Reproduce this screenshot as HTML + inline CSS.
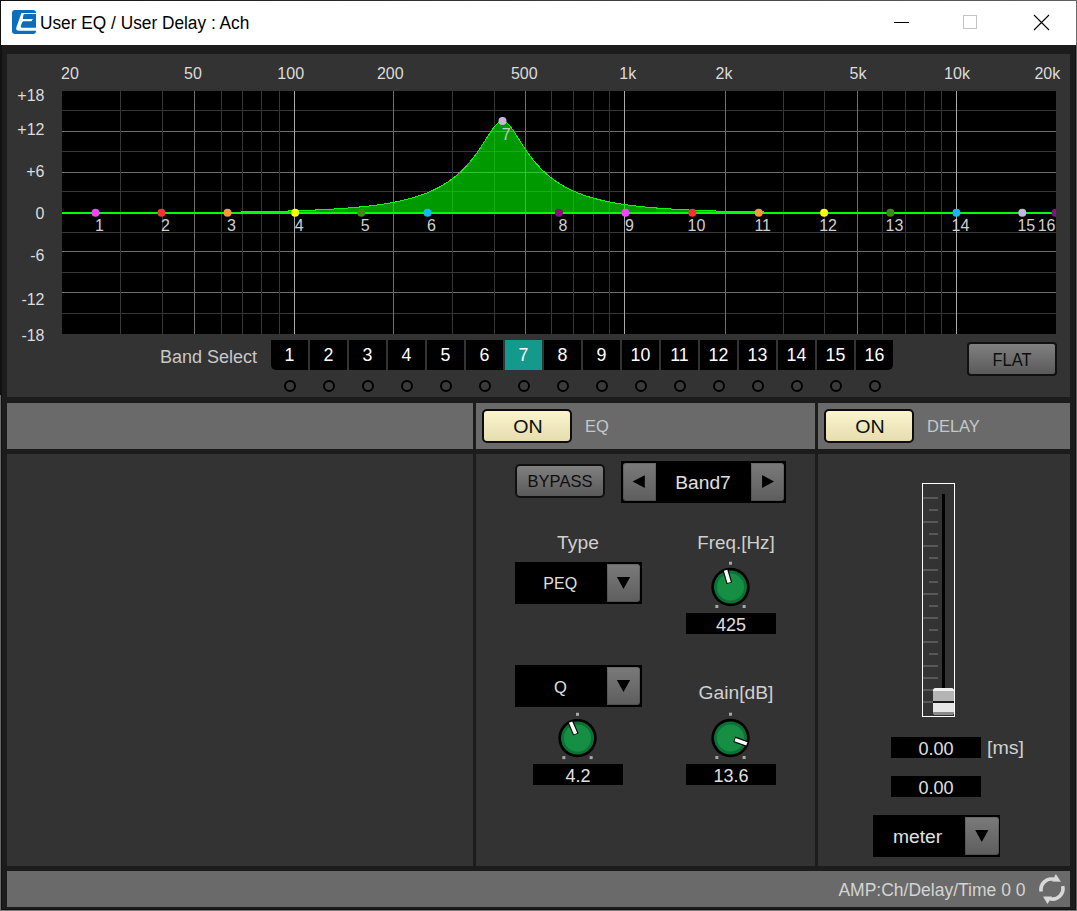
<!DOCTYPE html>
<html><head><meta charset="utf-8"><style>
html,body{margin:0;padding:0;width:1077px;height:911px;overflow:hidden;background:#808080;font-family:"Liberation Sans", sans-serif;}
</style></head><body>
<div style="position:absolute;left:0px;top:0px;width:1076px;height:910px;background:#1c1c1c;"></div><div style="position:absolute;left:0px;top:0px;width:1076px;height:1px;background:linear-gradient(90deg,#111,#606060);"></div><div style="position:absolute;left:0px;top:0px;width:1px;height:395px;background:#111;"></div><div style="position:absolute;left:0px;top:395px;width:1px;height:516px;background:#686868;"></div><div style="position:absolute;left:1px;top:45px;width:1px;height:865px;background:#111;"></div><div style="position:absolute;left:1075px;top:45px;width:1px;height:865px;background:#111;"></div><div style="position:absolute;left:1px;top:909px;width:1075px;height:1px;background:#111;"></div><div style="position:absolute;left:1076px;top:0px;width:1px;height:911px;background:#6a6a6a;"></div><div style="position:absolute;left:0px;top:910px;width:1077px;height:1px;background:#7a7a7a;"></div><div style="position:absolute;left:1px;top:1px;width:1075px;height:44px;background:#ffffff;"></div><svg style="position:absolute;left:12px;top:10px" width="24" height="24" viewBox="0 0 24 24">
<rect x="0" y="0" width="24" height="24" rx="3" fill="#0a6ebd"/>
<path d="M9.4 3.0 L24 3.0 L24 4.1 L12.8 4.1 Q11.5 4.1 11.2 5.6 L10.8 8.9 L20.9 8.9 L19.4 11.2 L11.8 11.2 Q10.4 11.2 10.0 12.6 L8.8 16.0 Q8.3 17.8 10.0 17.8 L24 17.8 L24 20.8 L7.2 20.8 Q3.4 20.8 4.4 17.2 Z" fill="#fff"/>
</svg><div style="position:absolute;left:40.2px;top:11.12px;line-height:25px;height:25px;font-size:18px;color:#000;white-space:nowrap;transform:scaleX(0.96);transform-origin:left center;">User EQ / User Delay : Ach</div><div style="position:absolute;left:894px;top:22px;width:15px;height:1px;background:#000;"></div><div style="position:absolute;left:963px;top:15px;width:14px;height:14px;background:transparent;box-sizing:border-box;border:1px solid #c4c4c4;"></div><svg style="position:absolute;left:1033px;top:14px" width="17" height="17" viewBox="0 0 17 17"><path d="M1 1 L16 16 M16 1 L1 16" stroke="#000" stroke-width="1.1"/></svg><div style="position:absolute;left:7px;top:54px;width:1063px;height:343px;background:#333333;"></div><svg style="position:absolute;left:62px;top:91px" width="994" height="243" viewBox="62 91 994 243" shape-rendering="crispEdges"><rect x="62" y="91" width="994" height="243" fill="#000"/><rect x="62" y="110" width="994" height="1" fill="#363636"/><rect x="62" y="131" width="994" height="1" fill="#6e6e6e"/><rect x="62" y="151" width="994" height="1" fill="#363636"/><rect x="62" y="172" width="994" height="1" fill="#6e6e6e"/><rect x="62" y="191" width="994" height="1" fill="#363636"/><rect x="62" y="232" width="994" height="1" fill="#363636"/><rect x="62" y="251" width="994" height="1" fill="#6e6e6e"/><rect x="62" y="272" width="994" height="1" fill="#363636"/><rect x="62" y="292" width="994" height="1" fill="#6e6e6e"/><rect x="62" y="313" width="994" height="1" fill="#363636"/><rect x="120" y="91" width="1" height="243" fill="#363636"/><rect x="162" y="91" width="1" height="243" fill="#363636"/><rect x="194" y="91" width="1" height="243" fill="#6e6e6e"/><rect x="221" y="91" width="1" height="243" fill="#363636"/><rect x="242" y="91" width="1" height="243" fill="#363636"/><rect x="261" y="91" width="1" height="243" fill="#363636"/><rect x="279" y="91" width="1" height="243" fill="#363636"/><rect x="294" y="91" width="1" height="243" fill="#aaaaaa"/><rect x="393" y="91" width="1" height="243" fill="#6e6e6e"/><rect x="452" y="91" width="1" height="243" fill="#363636"/><rect x="494" y="91" width="1" height="243" fill="#363636"/><rect x="525" y="91" width="1" height="243" fill="#6e6e6e"/><rect x="551" y="91" width="1" height="243" fill="#363636"/><rect x="573" y="91" width="1" height="243" fill="#363636"/><rect x="593" y="91" width="1" height="243" fill="#363636"/><rect x="609" y="91" width="1" height="243" fill="#363636"/><rect x="624" y="91" width="1" height="243" fill="#aaaaaa"/><rect x="725" y="91" width="1" height="243" fill="#6e6e6e"/><rect x="783" y="91" width="1" height="243" fill="#363636"/><rect x="824" y="91" width="1" height="243" fill="#363636"/><rect x="857" y="91" width="1" height="243" fill="#6e6e6e"/><rect x="882" y="91" width="1" height="243" fill="#363636"/><rect x="905" y="91" width="1" height="243" fill="#363636"/><rect x="924" y="91" width="1" height="243" fill="#363636"/><rect x="941" y="91" width="1" height="243" fill="#363636"/><rect x="956" y="91" width="1" height="243" fill="#aaaaaa"/><path d="M62.0 213.00 L62.5 212.92 L63.5 212.92 L64.5 212.92 L65.5 212.92 L66.5 212.91 L67.5 212.91 L68.5 212.91 L69.5 212.91 L70.5 212.91 L71.5 212.91 L72.5 212.91 L73.5 212.91 L74.5 212.90 L75.5 212.90 L76.5 212.90 L77.5 212.90 L78.5 212.90 L79.5 212.90 L80.5 212.90 L81.5 212.89 L82.5 212.89 L83.5 212.89 L84.5 212.89 L85.5 212.89 L86.5 212.89 L87.5 212.89 L88.5 212.88 L89.5 212.88 L90.5 212.88 L91.5 212.88 L92.5 212.88 L93.5 212.88 L94.5 212.87 L95.5 212.87 L96.5 212.87 L97.5 212.87 L98.5 212.87 L99.5 212.86 L100.5 212.86 L101.5 212.86 L102.5 212.86 L103.5 212.86 L104.5 212.85 L105.5 212.85 L106.5 212.85 L107.5 212.85 L108.5 212.85 L109.5 212.84 L110.5 212.84 L111.5 212.84 L112.5 212.84 L113.5 212.84 L114.5 212.83 L115.5 212.83 L116.5 212.83 L117.5 212.83 L118.5 212.82 L119.5 212.82 L120.5 212.82 L121.5 212.82 L122.5 212.81 L123.5 212.81 L124.5 212.81 L125.5 212.81 L126.5 212.80 L127.5 212.80 L128.5 212.80 L129.5 212.79 L130.5 212.79 L131.5 212.79 L132.5 212.79 L133.5 212.78 L134.5 212.78 L135.5 212.78 L136.5 212.77 L137.5 212.77 L138.5 212.77 L139.5 212.76 L140.5 212.76 L141.5 212.76 L142.5 212.75 L143.5 212.75 L144.5 212.75 L145.5 212.74 L146.5 212.74 L147.5 212.74 L148.5 212.73 L149.5 212.73 L150.5 212.72 L151.5 212.72 L152.5 212.72 L153.5 212.71 L154.5 212.71 L155.5 212.70 L156.5 212.70 L157.5 212.70 L158.5 212.69 L159.5 212.69 L160.5 212.68 L161.5 212.68 L162.5 212.67 L163.5 212.67 L164.5 212.66 L165.5 212.66 L166.5 212.65 L167.5 212.65 L168.5 212.64 L169.5 212.64 L170.5 212.63 L171.5 212.63 L172.5 212.62 L173.5 212.62 L174.5 212.61 L175.5 212.61 L176.5 212.60 L177.5 212.60 L178.5 212.59 L179.5 212.58 L180.5 212.58 L181.5 212.57 L182.5 212.57 L183.5 212.56 L184.5 212.55 L185.5 212.55 L186.5 212.54 L187.5 212.53 L188.5 212.53 L189.5 212.52 L190.5 212.51 L191.5 212.51 L192.5 212.50 L193.5 212.49 L194.5 212.49 L195.5 212.48 L196.5 212.47 L197.5 212.46 L198.5 212.46 L199.5 212.45 L200.5 212.44 L201.5 212.43 L202.5 212.42 L203.5 212.42 L204.5 212.41 L205.5 212.40 L206.5 212.39 L207.5 212.38 L208.5 212.37 L209.5 212.36 L210.5 212.36 L211.5 212.35 L212.5 212.34 L213.5 212.33 L214.5 212.32 L215.5 212.31 L216.5 212.30 L217.5 212.29 L218.5 212.28 L219.5 212.27 L220.5 212.26 L221.5 212.25 L222.5 212.24 L223.5 212.22 L224.5 212.21 L225.5 212.20 L226.5 212.19 L227.5 212.18 L228.5 212.17 L229.5 212.15 L230.5 212.14 L231.5 212.13 L232.5 212.12 L233.5 212.10 L234.5 212.09 L235.5 212.08 L236.5 212.07 L237.5 212.05 L238.5 212.04 L239.5 212.02 L240.5 212.01 L241.5 212.00 L242.5 211.98 L243.5 211.97 L244.5 211.95 L245.5 211.94 L246.5 211.92 L247.5 211.91 L248.5 211.89 L249.5 211.87 L250.5 211.86 L251.5 211.84 L252.5 211.82 L253.5 211.81 L254.5 211.79 L255.5 211.77 L256.5 211.75 L257.5 211.73 L258.5 211.72 L259.5 211.70 L260.5 211.68 L261.5 211.66 L262.5 211.64 L263.5 211.62 L264.5 211.60 L265.5 211.58 L266.5 211.56 L267.5 211.54 L268.5 211.52 L269.5 211.49 L270.5 211.47 L271.5 211.45 L272.5 211.43 L273.5 211.40 L274.5 211.38 L275.5 211.35 L276.5 211.33 L277.5 211.31 L278.5 211.28 L279.5 211.25 L280.5 211.23 L281.5 211.20 L282.5 211.18 L283.5 211.15 L284.5 211.12 L285.5 211.09 L286.5 211.06 L287.5 211.04 L288.5 211.01 L289.5 210.98 L290.5 210.95 L291.5 210.92 L292.5 210.88 L293.5 210.85 L294.5 210.82 L295.5 210.79 L296.5 210.75 L297.5 210.72 L298.5 210.69 L299.5 210.65 L300.5 210.62 L301.5 210.58 L302.5 210.54 L303.5 210.51 L304.5 210.47 L305.5 210.43 L306.5 210.39 L307.5 210.35 L308.5 210.31 L309.5 210.27 L310.5 210.23 L311.5 210.18 L312.5 210.14 L313.5 210.10 L314.5 210.05 L315.5 210.01 L316.5 209.96 L317.5 209.92 L318.5 209.87 L319.5 209.82 L320.5 209.77 L321.5 209.72 L322.5 209.67 L323.5 209.62 L324.5 209.56 L325.5 209.51 L326.5 209.46 L327.5 209.40 L328.5 209.35 L329.5 209.29 L330.5 209.23 L331.5 209.17 L332.5 209.11 L333.5 209.05 L334.5 208.99 L335.5 208.92 L336.5 208.86 L337.5 208.79 L338.5 208.73 L339.5 208.66 L340.5 208.59 L341.5 208.52 L342.5 208.45 L343.5 208.37 L344.5 208.30 L345.5 208.22 L346.5 208.15 L347.5 208.07 L348.5 207.99 L349.5 207.91 L350.5 207.83 L351.5 207.74 L352.5 207.66 L353.5 207.57 L354.5 207.48 L355.5 207.39 L356.5 207.30 L357.5 207.20 L358.5 207.11 L359.5 207.01 L360.5 206.91 L361.5 206.81 L362.5 206.71 L363.5 206.60 L364.5 206.50 L365.5 206.39 L366.5 206.28 L367.5 206.16 L368.5 206.05 L369.5 205.93 L370.5 205.81 L371.5 205.69 L372.5 205.56 L373.5 205.44 L374.5 205.31 L375.5 205.18 L376.5 205.04 L377.5 204.90 L378.5 204.76 L379.5 204.62 L380.5 204.48 L381.5 204.33 L382.5 204.18 L383.5 204.02 L384.5 203.87 L385.5 203.70 L386.5 203.54 L387.5 203.37 L388.5 203.20 L389.5 203.03 L390.5 202.85 L391.5 202.67 L392.5 202.48 L393.5 202.29 L394.5 202.10 L395.5 201.90 L396.5 201.70 L397.5 201.50 L398.5 201.29 L399.5 201.07 L400.5 200.85 L401.5 200.63 L402.5 200.40 L403.5 200.17 L404.5 199.93 L405.5 199.68 L406.5 199.43 L407.5 199.18 L408.5 198.92 L409.5 198.65 L410.5 198.38 L411.5 198.10 L412.5 197.82 L413.5 197.53 L414.5 197.23 L415.5 196.92 L416.5 196.61 L417.5 196.29 L418.5 195.97 L419.5 195.63 L420.5 195.29 L421.5 194.94 L422.5 194.58 L423.5 194.22 L424.5 193.84 L425.5 193.46 L426.5 193.07 L427.5 192.66 L428.5 192.25 L429.5 191.83 L430.5 191.40 L431.5 190.96 L432.5 190.50 L433.5 190.04 L434.5 189.56 L435.5 189.07 L436.5 188.57 L437.5 188.06 L438.5 187.54 L439.5 187.00 L440.5 186.45 L441.5 185.88 L442.5 185.30 L443.5 184.70 L444.5 184.09 L445.5 183.47 L446.5 182.83 L447.5 182.17 L448.5 181.49 L449.5 180.80 L450.5 180.09 L451.5 179.36 L452.5 178.61 L453.5 177.84 L454.5 177.05 L455.5 176.24 L456.5 175.41 L457.5 174.56 L458.5 173.69 L459.5 172.79 L460.5 171.87 L461.5 170.92 L462.5 169.95 L463.5 168.95 L464.5 167.93 L465.5 166.88 L466.5 165.80 L467.5 164.70 L468.5 163.56 L469.5 162.40 L470.5 161.21 L471.5 159.98 L472.5 158.73 L473.5 157.45 L474.5 156.13 L475.5 154.79 L476.5 153.42 L477.5 152.01 L478.5 150.58 L479.5 149.12 L480.5 147.64 L481.5 146.12 L482.5 144.59 L483.5 143.04 L484.5 141.47 L485.5 139.90 L486.5 138.31 L487.5 136.73 L488.5 135.16 L489.5 133.61 L490.5 132.09 L491.5 130.60 L492.5 129.17 L493.5 127.81 L494.5 126.53 L495.5 125.35 L496.5 124.29 L497.5 123.36 L498.5 122.58 L499.5 121.97 L500.5 121.53 L501.5 121.27 L502.5 121.20 L503.5 121.33 L504.5 121.64 L505.5 122.13 L506.5 122.79 L507.5 123.62 L508.5 124.59 L509.5 125.69 L510.5 126.89 L511.5 128.20 L512.5 129.58 L513.5 131.03 L514.5 132.53 L515.5 134.06 L516.5 135.62 L517.5 137.19 L518.5 138.78 L519.5 140.36 L520.5 141.93 L521.5 143.50 L522.5 145.04 L523.5 146.57 L524.5 148.07 L525.5 149.55 L526.5 151.00 L527.5 152.43 L528.5 153.82 L529.5 155.19 L530.5 156.52 L531.5 157.83 L532.5 159.10 L533.5 160.34 L534.5 161.56 L535.5 162.74 L536.5 163.90 L537.5 165.02 L538.5 166.12 L539.5 167.19 L540.5 168.23 L541.5 169.25 L542.5 170.24 L543.5 171.20 L544.5 172.14 L545.5 173.05 L546.5 173.94 L547.5 174.81 L548.5 175.66 L549.5 176.48 L550.5 177.29 L551.5 178.07 L552.5 178.83 L553.5 179.57 L554.5 180.30 L555.5 181.00 L556.5 181.69 L557.5 182.36 L558.5 183.02 L559.5 183.65 L560.5 184.27 L561.5 184.88 L562.5 185.47 L563.5 186.05 L564.5 186.61 L565.5 187.16 L566.5 187.69 L567.5 188.21 L568.5 188.72 L569.5 189.22 L570.5 189.70 L571.5 190.17 L572.5 190.64 L573.5 191.09 L574.5 191.53 L575.5 191.95 L576.5 192.37 L577.5 192.78 L578.5 193.18 L579.5 193.57 L580.5 193.95 L581.5 194.33 L582.5 194.69 L583.5 195.04 L584.5 195.39 L585.5 195.73 L586.5 196.06 L587.5 196.39 L588.5 196.70 L589.5 197.01 L590.5 197.32 L591.5 197.61 L592.5 197.90 L593.5 198.18 L594.5 198.46 L595.5 198.73 L596.5 199.00 L597.5 199.25 L598.5 199.51 L599.5 199.76 L600.5 200.00 L601.5 200.24 L602.5 200.47 L603.5 200.70 L604.5 200.92 L605.5 201.14 L606.5 201.35 L607.5 201.56 L608.5 201.76 L609.5 201.96 L610.5 202.16 L611.5 202.35 L612.5 202.54 L613.5 202.72 L614.5 202.90 L615.5 203.08 L616.5 203.25 L617.5 203.42 L618.5 203.59 L619.5 203.75 L620.5 203.91 L621.5 204.07 L622.5 204.22 L623.5 204.37 L624.5 204.52 L625.5 204.66 L626.5 204.81 L627.5 204.94 L628.5 205.08 L629.5 205.21 L630.5 205.35 L631.5 205.47 L632.5 205.60 L633.5 205.72 L634.5 205.85 L635.5 205.96 L636.5 206.08 L637.5 206.20 L638.5 206.31 L639.5 206.42 L640.5 206.53 L641.5 206.63 L642.5 206.74 L643.5 206.84 L644.5 206.94 L645.5 207.04 L646.5 207.14 L647.5 207.23 L648.5 207.32 L649.5 207.42 L650.5 207.51 L651.5 207.59 L652.5 207.68 L653.5 207.77 L654.5 207.85 L655.5 207.93 L656.5 208.01 L657.5 208.09 L658.5 208.17 L659.5 208.25 L660.5 208.32 L661.5 208.40 L662.5 208.47 L663.5 208.54 L664.5 208.61 L665.5 208.68 L666.5 208.75 L667.5 208.81 L668.5 208.88 L669.5 208.94 L670.5 209.00 L671.5 209.07 L672.5 209.13 L673.5 209.19 L674.5 209.25 L675.5 209.30 L676.5 209.36 L677.5 209.42 L678.5 209.47 L679.5 209.53 L680.5 209.58 L681.5 209.63 L682.5 209.68 L683.5 209.73 L684.5 209.78 L685.5 209.83 L686.5 209.88 L687.5 209.93 L688.5 209.98 L689.5 210.02 L690.5 210.07 L691.5 210.11 L692.5 210.15 L693.5 210.20 L694.5 210.24 L695.5 210.28 L696.5 210.32 L697.5 210.36 L698.5 210.40 L699.5 210.44 L700.5 210.48 L701.5 210.52 L702.5 210.55 L703.5 210.59 L704.5 210.63 L705.5 210.66 L706.5 210.70 L707.5 210.73 L708.5 210.76 L709.5 210.80 L710.5 210.83 L711.5 210.86 L712.5 210.89 L713.5 210.92 L714.5 210.96 L715.5 210.99 L716.5 211.02 L717.5 211.04 L718.5 211.07 L719.5 211.10 L720.5 211.13 L721.5 211.16 L722.5 211.18 L723.5 211.21 L724.5 211.24 L725.5 211.26 L726.5 211.29 L727.5 211.31 L728.5 211.34 L729.5 211.36 L730.5 211.39 L731.5 211.41 L732.5 211.43 L733.5 211.46 L734.5 211.48 L735.5 211.50 L736.5 211.52 L737.5 211.54 L738.5 211.56 L739.5 211.58 L740.5 211.61 L741.5 211.63 L742.5 211.65 L743.5 211.66 L744.5 211.68 L745.5 211.70 L746.5 211.72 L747.5 211.74 L748.5 211.76 L749.5 211.78 L750.5 211.79 L751.5 211.81 L752.5 211.83 L753.5 211.85 L754.5 211.86 L755.5 211.88 L756.5 211.89 L757.5 211.91 L758.5 211.93 L759.5 211.94 L760.5 211.96 L761.5 211.97 L762.5 211.99 L763.5 212.00 L764.5 212.01 L765.5 212.03 L766.5 212.04 L767.5 212.06 L768.5 212.07 L769.5 212.08 L770.5 212.10 L771.5 212.11 L772.5 212.12 L773.5 212.13 L774.5 212.15 L775.5 212.16 L776.5 212.17 L777.5 212.18 L778.5 212.19 L779.5 212.21 L780.5 212.22 L781.5 212.23 L782.5 212.24 L783.5 212.25 L784.5 212.26 L785.5 212.27 L786.5 212.28 L787.5 212.29 L788.5 212.30 L789.5 212.31 L790.5 212.32 L791.5 212.33 L792.5 212.34 L793.5 212.35 L794.5 212.36 L795.5 212.37 L796.5 212.38 L797.5 212.38 L798.5 212.39 L799.5 212.40 L800.5 212.41 L801.5 212.42 L802.5 212.43 L803.5 212.44 L804.5 212.44 L805.5 212.45 L806.5 212.46 L807.5 212.47 L808.5 212.47 L809.5 212.48 L810.5 212.49 L811.5 212.50 L812.5 212.50 L813.5 212.51 L814.5 212.52 L815.5 212.52 L816.5 212.53 L817.5 212.54 L818.5 212.54 L819.5 212.55 L820.5 212.56 L821.5 212.56 L822.5 212.57 L823.5 212.57 L824.5 212.58 L825.5 212.59 L826.5 212.59 L827.5 212.60 L828.5 212.60 L829.5 212.61 L830.5 212.61 L831.5 212.62 L832.5 212.63 L833.5 212.63 L834.5 212.64 L835.5 212.64 L836.5 212.65 L837.5 212.65 L838.5 212.66 L839.5 212.66 L840.5 212.66 L841.5 212.67 L842.5 212.67 L843.5 212.68 L844.5 212.68 L845.5 212.69 L846.5 212.69 L847.5 212.70 L848.5 212.70 L849.5 212.70 L850.5 212.71 L851.5 212.71 L852.5 212.72 L853.5 212.72 L854.5 212.72 L855.5 212.73 L856.5 212.73 L857.5 212.74 L858.5 212.74 L859.5 212.74 L860.5 212.75 L861.5 212.75 L862.5 212.75 L863.5 212.76 L864.5 212.76 L865.5 212.76 L866.5 212.77 L867.5 212.77 L868.5 212.77 L869.5 212.78 L870.5 212.78 L871.5 212.78 L872.5 212.79 L873.5 212.79 L874.5 212.79 L875.5 212.79 L876.5 212.80 L877.5 212.80 L878.5 212.80 L879.5 212.81 L880.5 212.81 L881.5 212.81 L882.5 212.81 L883.5 212.82 L884.5 212.82 L885.5 212.82 L886.5 212.82 L887.5 212.83 L888.5 212.83 L889.5 212.83 L890.5 212.83 L891.5 212.84 L892.5 212.84 L893.5 212.84 L894.5 212.84 L895.5 212.85 L896.5 212.85 L897.5 212.85 L898.5 212.85 L899.5 212.85 L900.5 212.86 L901.5 212.86 L902.5 212.86 L903.5 212.86 L904.5 212.86 L905.5 212.87 L906.5 212.87 L907.5 212.87 L908.5 212.87 L909.5 212.87 L910.5 212.87 L911.5 212.88 L912.5 212.88 L913.5 212.88 L914.5 212.88 L915.5 212.88 L916.5 212.88 L917.5 212.89 L918.5 212.89 L919.5 212.89 L920.5 212.89 L921.5 212.89 L922.5 212.89 L923.5 212.90 L924.5 212.90 L925.5 212.90 L926.5 212.90 L927.5 212.90 L928.5 212.90 L929.5 212.90 L930.5 212.90 L931.5 212.91 L932.5 212.91 L933.5 212.91 L934.5 212.91 L935.5 212.91 L936.5 212.91 L937.5 212.91 L938.5 212.91 L939.5 212.92 L940.5 212.92 L941.5 212.92 L942.5 212.92 L943.5 212.92 L944.5 212.92 L945.5 212.92 L946.5 212.92 L947.5 212.92 L948.5 212.93 L949.5 212.93 L950.5 212.93 L951.5 212.93 L952.5 212.93 L953.5 212.93 L954.5 212.93 L955.5 212.93 L956.5 212.93 L957.5 212.93 L958.5 212.94 L959.5 212.94 L960.5 212.94 L961.5 212.94 L962.5 212.94 L963.5 212.94 L964.5 212.94 L965.5 212.94 L966.5 212.94 L967.5 212.94 L968.5 212.94 L969.5 212.94 L970.5 212.95 L971.5 212.95 L972.5 212.95 L973.5 212.95 L974.5 212.95 L975.5 212.95 L976.5 212.95 L977.5 212.95 L978.5 212.95 L979.5 212.95 L980.5 212.95 L981.5 212.95 L982.5 212.95 L983.5 212.95 L984.5 212.96 L985.5 212.96 L986.5 212.96 L987.5 212.96 L988.5 212.96 L989.5 212.96 L990.5 212.96 L991.5 212.96 L992.5 212.96 L993.5 212.96 L994.5 212.96 L995.5 212.96 L996.5 212.96 L997.5 212.96 L998.5 212.96 L999.5 212.96 L1000.5 212.96 L1001.5 212.96 L1002.5 212.97 L1003.5 212.97 L1004.5 212.97 L1005.5 212.97 L1006.5 212.97 L1007.5 212.97 L1008.5 212.97 L1009.5 212.97 L1010.5 212.97 L1011.5 212.97 L1012.5 212.97 L1013.5 212.97 L1014.5 212.97 L1015.5 212.97 L1016.5 212.97 L1017.5 212.97 L1018.5 212.97 L1019.5 212.97 L1020.5 212.97 L1021.5 212.97 L1022.5 212.97 L1023.5 212.97 L1024.5 212.97 L1025.5 212.97 L1026.5 212.98 L1027.5 212.98 L1028.5 212.98 L1029.5 212.98 L1030.5 212.98 L1031.5 212.98 L1032.5 212.98 L1033.5 212.98 L1034.5 212.98 L1035.5 212.98 L1036.5 212.98 L1037.5 212.98 L1038.5 212.98 L1039.5 212.98 L1040.5 212.98 L1041.5 212.98 L1042.5 212.98 L1043.5 212.98 L1044.5 212.98 L1045.5 212.98 L1046.5 212.98 L1047.5 212.98 L1048.5 212.98 L1049.5 212.98 L1050.5 212.98 L1051.5 212.98 L1052.5 212.98 L1053.5 212.98 L1054.5 212.98 L1055.5 212.98 L1056.5 212.98 L1056.0 213.00 Z" fill="rgba(0,255,0,0.6)" stroke="none" shape-rendering="geometricPrecision"/><path d="M62.5 212.92 L63.5 212.92 L64.5 212.92 L65.5 212.92 L66.5 212.91 L67.5 212.91 L68.5 212.91 L69.5 212.91 L70.5 212.91 L71.5 212.91 L72.5 212.91 L73.5 212.91 L74.5 212.90 L75.5 212.90 L76.5 212.90 L77.5 212.90 L78.5 212.90 L79.5 212.90 L80.5 212.90 L81.5 212.89 L82.5 212.89 L83.5 212.89 L84.5 212.89 L85.5 212.89 L86.5 212.89 L87.5 212.89 L88.5 212.88 L89.5 212.88 L90.5 212.88 L91.5 212.88 L92.5 212.88 L93.5 212.88 L94.5 212.87 L95.5 212.87 L96.5 212.87 L97.5 212.87 L98.5 212.87 L99.5 212.86 L100.5 212.86 L101.5 212.86 L102.5 212.86 L103.5 212.86 L104.5 212.85 L105.5 212.85 L106.5 212.85 L107.5 212.85 L108.5 212.85 L109.5 212.84 L110.5 212.84 L111.5 212.84 L112.5 212.84 L113.5 212.84 L114.5 212.83 L115.5 212.83 L116.5 212.83 L117.5 212.83 L118.5 212.82 L119.5 212.82 L120.5 212.82 L121.5 212.82 L122.5 212.81 L123.5 212.81 L124.5 212.81 L125.5 212.81 L126.5 212.80 L127.5 212.80 L128.5 212.80 L129.5 212.79 L130.5 212.79 L131.5 212.79 L132.5 212.79 L133.5 212.78 L134.5 212.78 L135.5 212.78 L136.5 212.77 L137.5 212.77 L138.5 212.77 L139.5 212.76 L140.5 212.76 L141.5 212.76 L142.5 212.75 L143.5 212.75 L144.5 212.75 L145.5 212.74 L146.5 212.74 L147.5 212.74 L148.5 212.73 L149.5 212.73 L150.5 212.72 L151.5 212.72 L152.5 212.72 L153.5 212.71 L154.5 212.71 L155.5 212.70 L156.5 212.70 L157.5 212.70 L158.5 212.69 L159.5 212.69 L160.5 212.68 L161.5 212.68 L162.5 212.67 L163.5 212.67 L164.5 212.66 L165.5 212.66 L166.5 212.65 L167.5 212.65 L168.5 212.64 L169.5 212.64 L170.5 212.63 L171.5 212.63 L172.5 212.62 L173.5 212.62 L174.5 212.61 L175.5 212.61 L176.5 212.60 L177.5 212.60 L178.5 212.59 L179.5 212.58 L180.5 212.58 L181.5 212.57 L182.5 212.57 L183.5 212.56 L184.5 212.55 L185.5 212.55 L186.5 212.54 L187.5 212.53 L188.5 212.53 L189.5 212.52 L190.5 212.51 L191.5 212.51 L192.5 212.50 L193.5 212.49 L194.5 212.49 L195.5 212.48 L196.5 212.47 L197.5 212.46 L198.5 212.46 L199.5 212.45 L200.5 212.44 L201.5 212.43 L202.5 212.42 L203.5 212.42 L204.5 212.41 L205.5 212.40 L206.5 212.39 L207.5 212.38 L208.5 212.37 L209.5 212.36 L210.5 212.36 L211.5 212.35 L212.5 212.34 L213.5 212.33 L214.5 212.32 L215.5 212.31 L216.5 212.30 L217.5 212.29 L218.5 212.28 L219.5 212.27 L220.5 212.26 L221.5 212.25 L222.5 212.24 L223.5 212.22 L224.5 212.21 L225.5 212.20 L226.5 212.19 L227.5 212.18 L228.5 212.17 L229.5 212.15 L230.5 212.14 L231.5 212.13 L232.5 212.12 L233.5 212.10 L234.5 212.09 L235.5 212.08 L236.5 212.07 L237.5 212.05 L238.5 212.04 L239.5 212.02 L240.5 212.01 L241.5 212.00 L242.5 211.98 L243.5 211.97 L244.5 211.95 L245.5 211.94 L246.5 211.92 L247.5 211.91 L248.5 211.89 L249.5 211.87 L250.5 211.86 L251.5 211.84 L252.5 211.82 L253.5 211.81 L254.5 211.79 L255.5 211.77 L256.5 211.75 L257.5 211.73 L258.5 211.72 L259.5 211.70 L260.5 211.68 L261.5 211.66 L262.5 211.64 L263.5 211.62 L264.5 211.60 L265.5 211.58 L266.5 211.56 L267.5 211.54 L268.5 211.52 L269.5 211.49 L270.5 211.47 L271.5 211.45 L272.5 211.43 L273.5 211.40 L274.5 211.38 L275.5 211.35 L276.5 211.33 L277.5 211.31 L278.5 211.28 L279.5 211.25 L280.5 211.23 L281.5 211.20 L282.5 211.18 L283.5 211.15 L284.5 211.12 L285.5 211.09 L286.5 211.06 L287.5 211.04 L288.5 211.01 L289.5 210.98 L290.5 210.95 L291.5 210.92 L292.5 210.88 L293.5 210.85 L294.5 210.82 L295.5 210.79 L296.5 210.75 L297.5 210.72 L298.5 210.69 L299.5 210.65 L300.5 210.62 L301.5 210.58 L302.5 210.54 L303.5 210.51 L304.5 210.47 L305.5 210.43 L306.5 210.39 L307.5 210.35 L308.5 210.31 L309.5 210.27 L310.5 210.23 L311.5 210.18 L312.5 210.14 L313.5 210.10 L314.5 210.05 L315.5 210.01 L316.5 209.96 L317.5 209.92 L318.5 209.87 L319.5 209.82 L320.5 209.77 L321.5 209.72 L322.5 209.67 L323.5 209.62 L324.5 209.56 L325.5 209.51 L326.5 209.46 L327.5 209.40 L328.5 209.35 L329.5 209.29 L330.5 209.23 L331.5 209.17 L332.5 209.11 L333.5 209.05 L334.5 208.99 L335.5 208.92 L336.5 208.86 L337.5 208.79 L338.5 208.73 L339.5 208.66 L340.5 208.59 L341.5 208.52 L342.5 208.45 L343.5 208.37 L344.5 208.30 L345.5 208.22 L346.5 208.15 L347.5 208.07 L348.5 207.99 L349.5 207.91 L350.5 207.83 L351.5 207.74 L352.5 207.66 L353.5 207.57 L354.5 207.48 L355.5 207.39 L356.5 207.30 L357.5 207.20 L358.5 207.11 L359.5 207.01 L360.5 206.91 L361.5 206.81 L362.5 206.71 L363.5 206.60 L364.5 206.50 L365.5 206.39 L366.5 206.28 L367.5 206.16 L368.5 206.05 L369.5 205.93 L370.5 205.81 L371.5 205.69 L372.5 205.56 L373.5 205.44 L374.5 205.31 L375.5 205.18 L376.5 205.04 L377.5 204.90 L378.5 204.76 L379.5 204.62 L380.5 204.48 L381.5 204.33 L382.5 204.18 L383.5 204.02 L384.5 203.87 L385.5 203.70 L386.5 203.54 L387.5 203.37 L388.5 203.20 L389.5 203.03 L390.5 202.85 L391.5 202.67 L392.5 202.48 L393.5 202.29 L394.5 202.10 L395.5 201.90 L396.5 201.70 L397.5 201.50 L398.5 201.29 L399.5 201.07 L400.5 200.85 L401.5 200.63 L402.5 200.40 L403.5 200.17 L404.5 199.93 L405.5 199.68 L406.5 199.43 L407.5 199.18 L408.5 198.92 L409.5 198.65 L410.5 198.38 L411.5 198.10 L412.5 197.82 L413.5 197.53 L414.5 197.23 L415.5 196.92 L416.5 196.61 L417.5 196.29 L418.5 195.97 L419.5 195.63 L420.5 195.29 L421.5 194.94 L422.5 194.58 L423.5 194.22 L424.5 193.84 L425.5 193.46 L426.5 193.07 L427.5 192.66 L428.5 192.25 L429.5 191.83 L430.5 191.40 L431.5 190.96 L432.5 190.50 L433.5 190.04 L434.5 189.56 L435.5 189.07 L436.5 188.57 L437.5 188.06 L438.5 187.54 L439.5 187.00 L440.5 186.45 L441.5 185.88 L442.5 185.30 L443.5 184.70 L444.5 184.09 L445.5 183.47 L446.5 182.83 L447.5 182.17 L448.5 181.49 L449.5 180.80 L450.5 180.09 L451.5 179.36 L452.5 178.61 L453.5 177.84 L454.5 177.05 L455.5 176.24 L456.5 175.41 L457.5 174.56 L458.5 173.69 L459.5 172.79 L460.5 171.87 L461.5 170.92 L462.5 169.95 L463.5 168.95 L464.5 167.93 L465.5 166.88 L466.5 165.80 L467.5 164.70 L468.5 163.56 L469.5 162.40 L470.5 161.21 L471.5 159.98 L472.5 158.73 L473.5 157.45 L474.5 156.13 L475.5 154.79 L476.5 153.42 L477.5 152.01 L478.5 150.58 L479.5 149.12 L480.5 147.64 L481.5 146.12 L482.5 144.59 L483.5 143.04 L484.5 141.47 L485.5 139.90 L486.5 138.31 L487.5 136.73 L488.5 135.16 L489.5 133.61 L490.5 132.09 L491.5 130.60 L492.5 129.17 L493.5 127.81 L494.5 126.53 L495.5 125.35 L496.5 124.29 L497.5 123.36 L498.5 122.58 L499.5 121.97 L500.5 121.53 L501.5 121.27 L502.5 121.20 L503.5 121.33 L504.5 121.64 L505.5 122.13 L506.5 122.79 L507.5 123.62 L508.5 124.59 L509.5 125.69 L510.5 126.89 L511.5 128.20 L512.5 129.58 L513.5 131.03 L514.5 132.53 L515.5 134.06 L516.5 135.62 L517.5 137.19 L518.5 138.78 L519.5 140.36 L520.5 141.93 L521.5 143.50 L522.5 145.04 L523.5 146.57 L524.5 148.07 L525.5 149.55 L526.5 151.00 L527.5 152.43 L528.5 153.82 L529.5 155.19 L530.5 156.52 L531.5 157.83 L532.5 159.10 L533.5 160.34 L534.5 161.56 L535.5 162.74 L536.5 163.90 L537.5 165.02 L538.5 166.12 L539.5 167.19 L540.5 168.23 L541.5 169.25 L542.5 170.24 L543.5 171.20 L544.5 172.14 L545.5 173.05 L546.5 173.94 L547.5 174.81 L548.5 175.66 L549.5 176.48 L550.5 177.29 L551.5 178.07 L552.5 178.83 L553.5 179.57 L554.5 180.30 L555.5 181.00 L556.5 181.69 L557.5 182.36 L558.5 183.02 L559.5 183.65 L560.5 184.27 L561.5 184.88 L562.5 185.47 L563.5 186.05 L564.5 186.61 L565.5 187.16 L566.5 187.69 L567.5 188.21 L568.5 188.72 L569.5 189.22 L570.5 189.70 L571.5 190.17 L572.5 190.64 L573.5 191.09 L574.5 191.53 L575.5 191.95 L576.5 192.37 L577.5 192.78 L578.5 193.18 L579.5 193.57 L580.5 193.95 L581.5 194.33 L582.5 194.69 L583.5 195.04 L584.5 195.39 L585.5 195.73 L586.5 196.06 L587.5 196.39 L588.5 196.70 L589.5 197.01 L590.5 197.32 L591.5 197.61 L592.5 197.90 L593.5 198.18 L594.5 198.46 L595.5 198.73 L596.5 199.00 L597.5 199.25 L598.5 199.51 L599.5 199.76 L600.5 200.00 L601.5 200.24 L602.5 200.47 L603.5 200.70 L604.5 200.92 L605.5 201.14 L606.5 201.35 L607.5 201.56 L608.5 201.76 L609.5 201.96 L610.5 202.16 L611.5 202.35 L612.5 202.54 L613.5 202.72 L614.5 202.90 L615.5 203.08 L616.5 203.25 L617.5 203.42 L618.5 203.59 L619.5 203.75 L620.5 203.91 L621.5 204.07 L622.5 204.22 L623.5 204.37 L624.5 204.52 L625.5 204.66 L626.5 204.81 L627.5 204.94 L628.5 205.08 L629.5 205.21 L630.5 205.35 L631.5 205.47 L632.5 205.60 L633.5 205.72 L634.5 205.85 L635.5 205.96 L636.5 206.08 L637.5 206.20 L638.5 206.31 L639.5 206.42 L640.5 206.53 L641.5 206.63 L642.5 206.74 L643.5 206.84 L644.5 206.94 L645.5 207.04 L646.5 207.14 L647.5 207.23 L648.5 207.32 L649.5 207.42 L650.5 207.51 L651.5 207.59 L652.5 207.68 L653.5 207.77 L654.5 207.85 L655.5 207.93 L656.5 208.01 L657.5 208.09 L658.5 208.17 L659.5 208.25 L660.5 208.32 L661.5 208.40 L662.5 208.47 L663.5 208.54 L664.5 208.61 L665.5 208.68 L666.5 208.75 L667.5 208.81 L668.5 208.88 L669.5 208.94 L670.5 209.00 L671.5 209.07 L672.5 209.13 L673.5 209.19 L674.5 209.25 L675.5 209.30 L676.5 209.36 L677.5 209.42 L678.5 209.47 L679.5 209.53 L680.5 209.58 L681.5 209.63 L682.5 209.68 L683.5 209.73 L684.5 209.78 L685.5 209.83 L686.5 209.88 L687.5 209.93 L688.5 209.98 L689.5 210.02 L690.5 210.07 L691.5 210.11 L692.5 210.15 L693.5 210.20 L694.5 210.24 L695.5 210.28 L696.5 210.32 L697.5 210.36 L698.5 210.40 L699.5 210.44 L700.5 210.48 L701.5 210.52 L702.5 210.55 L703.5 210.59 L704.5 210.63 L705.5 210.66 L706.5 210.70 L707.5 210.73 L708.5 210.76 L709.5 210.80 L710.5 210.83 L711.5 210.86 L712.5 210.89 L713.5 210.92 L714.5 210.96 L715.5 210.99 L716.5 211.02 L717.5 211.04 L718.5 211.07 L719.5 211.10 L720.5 211.13 L721.5 211.16 L722.5 211.18 L723.5 211.21 L724.5 211.24 L725.5 211.26 L726.5 211.29 L727.5 211.31 L728.5 211.34 L729.5 211.36 L730.5 211.39 L731.5 211.41 L732.5 211.43 L733.5 211.46 L734.5 211.48 L735.5 211.50 L736.5 211.52 L737.5 211.54 L738.5 211.56 L739.5 211.58 L740.5 211.61 L741.5 211.63 L742.5 211.65 L743.5 211.66 L744.5 211.68 L745.5 211.70 L746.5 211.72 L747.5 211.74 L748.5 211.76 L749.5 211.78 L750.5 211.79 L751.5 211.81 L752.5 211.83 L753.5 211.85 L754.5 211.86 L755.5 211.88 L756.5 211.89 L757.5 211.91 L758.5 211.93 L759.5 211.94 L760.5 211.96 L761.5 211.97 L762.5 211.99 L763.5 212.00 L764.5 212.01 L765.5 212.03 L766.5 212.04 L767.5 212.06 L768.5 212.07 L769.5 212.08 L770.5 212.10 L771.5 212.11 L772.5 212.12 L773.5 212.13 L774.5 212.15 L775.5 212.16 L776.5 212.17 L777.5 212.18 L778.5 212.19 L779.5 212.21 L780.5 212.22 L781.5 212.23 L782.5 212.24 L783.5 212.25 L784.5 212.26 L785.5 212.27 L786.5 212.28 L787.5 212.29 L788.5 212.30 L789.5 212.31 L790.5 212.32 L791.5 212.33 L792.5 212.34 L793.5 212.35 L794.5 212.36 L795.5 212.37 L796.5 212.38 L797.5 212.38 L798.5 212.39 L799.5 212.40 L800.5 212.41 L801.5 212.42 L802.5 212.43 L803.5 212.44 L804.5 212.44 L805.5 212.45 L806.5 212.46 L807.5 212.47 L808.5 212.47 L809.5 212.48 L810.5 212.49 L811.5 212.50 L812.5 212.50 L813.5 212.51 L814.5 212.52 L815.5 212.52 L816.5 212.53 L817.5 212.54 L818.5 212.54 L819.5 212.55 L820.5 212.56 L821.5 212.56 L822.5 212.57 L823.5 212.57 L824.5 212.58 L825.5 212.59 L826.5 212.59 L827.5 212.60 L828.5 212.60 L829.5 212.61 L830.5 212.61 L831.5 212.62 L832.5 212.63 L833.5 212.63 L834.5 212.64 L835.5 212.64 L836.5 212.65 L837.5 212.65 L838.5 212.66 L839.5 212.66 L840.5 212.66 L841.5 212.67 L842.5 212.67 L843.5 212.68 L844.5 212.68 L845.5 212.69 L846.5 212.69 L847.5 212.70 L848.5 212.70 L849.5 212.70 L850.5 212.71 L851.5 212.71 L852.5 212.72 L853.5 212.72 L854.5 212.72 L855.5 212.73 L856.5 212.73 L857.5 212.74 L858.5 212.74 L859.5 212.74 L860.5 212.75 L861.5 212.75 L862.5 212.75 L863.5 212.76 L864.5 212.76 L865.5 212.76 L866.5 212.77 L867.5 212.77 L868.5 212.77 L869.5 212.78 L870.5 212.78 L871.5 212.78 L872.5 212.79 L873.5 212.79 L874.5 212.79 L875.5 212.79 L876.5 212.80 L877.5 212.80 L878.5 212.80 L879.5 212.81 L880.5 212.81 L881.5 212.81 L882.5 212.81 L883.5 212.82 L884.5 212.82 L885.5 212.82 L886.5 212.82 L887.5 212.83 L888.5 212.83 L889.5 212.83 L890.5 212.83 L891.5 212.84 L892.5 212.84 L893.5 212.84 L894.5 212.84 L895.5 212.85 L896.5 212.85 L897.5 212.85 L898.5 212.85 L899.5 212.85 L900.5 212.86 L901.5 212.86 L902.5 212.86 L903.5 212.86 L904.5 212.86 L905.5 212.87 L906.5 212.87 L907.5 212.87 L908.5 212.87 L909.5 212.87 L910.5 212.87 L911.5 212.88 L912.5 212.88 L913.5 212.88 L914.5 212.88 L915.5 212.88 L916.5 212.88 L917.5 212.89 L918.5 212.89 L919.5 212.89 L920.5 212.89 L921.5 212.89 L922.5 212.89 L923.5 212.90 L924.5 212.90 L925.5 212.90 L926.5 212.90 L927.5 212.90 L928.5 212.90 L929.5 212.90 L930.5 212.90 L931.5 212.91 L932.5 212.91 L933.5 212.91 L934.5 212.91 L935.5 212.91 L936.5 212.91 L937.5 212.91 L938.5 212.91 L939.5 212.92 L940.5 212.92 L941.5 212.92 L942.5 212.92 L943.5 212.92 L944.5 212.92 L945.5 212.92 L946.5 212.92 L947.5 212.92 L948.5 212.93 L949.5 212.93 L950.5 212.93 L951.5 212.93 L952.5 212.93 L953.5 212.93 L954.5 212.93 L955.5 212.93 L956.5 212.93 L957.5 212.93 L958.5 212.94 L959.5 212.94 L960.5 212.94 L961.5 212.94 L962.5 212.94 L963.5 212.94 L964.5 212.94 L965.5 212.94 L966.5 212.94 L967.5 212.94 L968.5 212.94 L969.5 212.94 L970.5 212.95 L971.5 212.95 L972.5 212.95 L973.5 212.95 L974.5 212.95 L975.5 212.95 L976.5 212.95 L977.5 212.95 L978.5 212.95 L979.5 212.95 L980.5 212.95 L981.5 212.95 L982.5 212.95 L983.5 212.95 L984.5 212.96 L985.5 212.96 L986.5 212.96 L987.5 212.96 L988.5 212.96 L989.5 212.96 L990.5 212.96 L991.5 212.96 L992.5 212.96 L993.5 212.96 L994.5 212.96 L995.5 212.96 L996.5 212.96 L997.5 212.96 L998.5 212.96 L999.5 212.96 L1000.5 212.96 L1001.5 212.96 L1002.5 212.97 L1003.5 212.97 L1004.5 212.97 L1005.5 212.97 L1006.5 212.97 L1007.5 212.97 L1008.5 212.97 L1009.5 212.97 L1010.5 212.97 L1011.5 212.97 L1012.5 212.97 L1013.5 212.97 L1014.5 212.97 L1015.5 212.97 L1016.5 212.97 L1017.5 212.97 L1018.5 212.97 L1019.5 212.97 L1020.5 212.97 L1021.5 212.97 L1022.5 212.97 L1023.5 212.97 L1024.5 212.97 L1025.5 212.97 L1026.5 212.98 L1027.5 212.98 L1028.5 212.98 L1029.5 212.98 L1030.5 212.98 L1031.5 212.98 L1032.5 212.98 L1033.5 212.98 L1034.5 212.98 L1035.5 212.98 L1036.5 212.98 L1037.5 212.98 L1038.5 212.98 L1039.5 212.98 L1040.5 212.98 L1041.5 212.98 L1042.5 212.98 L1043.5 212.98 L1044.5 212.98 L1045.5 212.98 L1046.5 212.98 L1047.5 212.98 L1048.5 212.98 L1049.5 212.98 L1050.5 212.98 L1051.5 212.98 L1052.5 212.98 L1053.5 212.98 L1054.5 212.98 L1055.5 212.98 L1056.5 212.98" fill="none" stroke="#00ff00" stroke-width="1" shape-rendering="crispEdges"/><rect x="62" y="212" width="994" height="2" fill="#00ff00"/><circle cx="95.5" cy="212.8" r="4" fill="#ff40ff" shape-rendering="geometricPrecision"/><circle cx="161.5" cy="212.8" r="4" fill="#ff3030" shape-rendering="geometricPrecision"/><circle cx="227.5" cy="212.8" r="4" fill="#ff9933" shape-rendering="geometricPrecision"/><circle cx="295.1" cy="212.8" r="4" fill="#ffff00" shape-rendering="geometricPrecision"/><circle cx="361.3" cy="212.8" r="4" fill="#3a8c14" shape-rendering="geometricPrecision"/><circle cx="427.5" cy="212.8" r="4" fill="#10b8f8" shape-rendering="geometricPrecision"/><circle cx="502.5" cy="121.1" r="4" fill="#c8b4e0" shape-rendering="geometricPrecision"/><circle cx="558.9" cy="212.8" r="4" fill="#8a1080" shape-rendering="geometricPrecision"/><circle cx="625.5" cy="212.8" r="4" fill="#ff40ff" shape-rendering="geometricPrecision"/><circle cx="692.4" cy="212.8" r="4" fill="#ff3030" shape-rendering="geometricPrecision"/><circle cx="758.7" cy="212.8" r="4" fill="#ff9933" shape-rendering="geometricPrecision"/><circle cx="824.1" cy="212.8" r="4" fill="#ffff00" shape-rendering="geometricPrecision"/><circle cx="890.4" cy="212.8" r="4" fill="#3a8c14" shape-rendering="geometricPrecision"/><circle cx="956.4" cy="212.8" r="4" fill="#10b8f8" shape-rendering="geometricPrecision"/><circle cx="1022.3" cy="212.8" r="4" fill="#c8b4e0" shape-rendering="geometricPrecision"/><circle cx="1055.5" cy="212.8" r="4" fill="#8a1080" shape-rendering="geometricPrecision"/></svg><div style="position:absolute;left:79.50px;top:214.79px;width:40px;text-align:center;line-height:22px;height:22px;font-size:16px;color:#d0d0d0;white-space:nowrap;">1</div><div style="position:absolute;left:145.50px;top:214.79px;width:40px;text-align:center;line-height:22px;height:22px;font-size:16px;color:#d0d0d0;white-space:nowrap;">2</div><div style="position:absolute;left:211.50px;top:214.79px;width:40px;text-align:center;line-height:22px;height:22px;font-size:16px;color:#d0d0d0;white-space:nowrap;">3</div><div style="position:absolute;left:279.10px;top:214.79px;width:40px;text-align:center;line-height:22px;height:22px;font-size:16px;color:#d0d0d0;white-space:nowrap;">4</div><div style="position:absolute;left:345.30px;top:214.79px;width:40px;text-align:center;line-height:22px;height:22px;font-size:16px;color:#d0d0d0;white-space:nowrap;">5</div><div style="position:absolute;left:411.50px;top:214.79px;width:40px;text-align:center;line-height:22px;height:22px;font-size:16px;color:#d0d0d0;white-space:nowrap;">6</div><div style="position:absolute;left:486.30px;top:124.49px;width:40px;text-align:center;line-height:22px;height:22px;font-size:16px;color:#c8c8c8;white-space:nowrap;">7</div><div style="position:absolute;left:542.90px;top:214.79px;width:40px;text-align:center;line-height:22px;height:22px;font-size:16px;color:#d0d0d0;white-space:nowrap;">8</div><div style="position:absolute;left:609.50px;top:214.79px;width:40px;text-align:center;line-height:22px;height:22px;font-size:16px;color:#d0d0d0;white-space:nowrap;">9</div><div style="position:absolute;left:676.40px;top:214.79px;width:40px;text-align:center;line-height:22px;height:22px;font-size:16px;color:#d0d0d0;white-space:nowrap;">10</div><div style="position:absolute;left:742.70px;top:214.79px;width:40px;text-align:center;line-height:22px;height:22px;font-size:16px;color:#d0d0d0;white-space:nowrap;">11</div><div style="position:absolute;left:808.10px;top:214.79px;width:40px;text-align:center;line-height:22px;height:22px;font-size:16px;color:#d0d0d0;white-space:nowrap;">12</div><div style="position:absolute;left:874.40px;top:214.79px;width:40px;text-align:center;line-height:22px;height:22px;font-size:16px;color:#d0d0d0;white-space:nowrap;">13</div><div style="position:absolute;left:940.40px;top:214.79px;width:40px;text-align:center;line-height:22px;height:22px;font-size:16px;color:#d0d0d0;white-space:nowrap;">14</div><div style="position:absolute;left:1006.30px;top:214.79px;width:40px;text-align:center;line-height:22px;height:22px;font-size:16px;color:#d0d0d0;white-space:nowrap;">15</div><div style="position:absolute;left:1015.50px;top:214.79px;width:40px;text-align:right;line-height:22px;height:22px;font-size:16px;color:#d0d0d0;white-space:nowrap;">16</div><div style="position:absolute;left:-15.50px;top:85.49px;width:60px;text-align:right;line-height:22px;height:22px;font-size:16px;color:#dcdcdc;white-space:nowrap;">+18</div><div style="position:absolute;left:-15.50px;top:119.29px;width:60px;text-align:right;line-height:22px;height:22px;font-size:16px;color:#dcdcdc;white-space:nowrap;">+12</div><div style="position:absolute;left:-15.50px;top:160.59px;width:60px;text-align:right;line-height:22px;height:22px;font-size:16px;color:#dcdcdc;white-space:nowrap;">+6</div><div style="position:absolute;left:-15.50px;top:202.59px;width:60px;text-align:right;line-height:22px;height:22px;font-size:16px;color:#dcdcdc;white-space:nowrap;">0</div><div style="position:absolute;left:-15.50px;top:244.89px;width:60px;text-align:right;line-height:22px;height:22px;font-size:16px;color:#dcdcdc;white-space:nowrap;">-6</div><div style="position:absolute;left:-15.50px;top:288.79px;width:60px;text-align:right;line-height:22px;height:22px;font-size:16px;color:#dcdcdc;white-space:nowrap;">-12</div><div style="position:absolute;left:-15.50px;top:324.59px;width:60px;text-align:right;line-height:22px;height:22px;font-size:16px;color:#dcdcdc;white-space:nowrap;">-18</div><div style="position:absolute;left:61px;top:62.59px;line-height:22px;height:22px;font-size:16px;color:#dcdcdc;white-space:nowrap;">20</div><div style="position:absolute;left:163.00px;top:62.59px;width:60px;text-align:center;line-height:22px;height:22px;font-size:16px;color:#dcdcdc;white-space:nowrap;">50</div><div style="position:absolute;left:260.70px;top:62.59px;width:60px;text-align:center;line-height:22px;height:22px;font-size:16px;color:#dcdcdc;white-space:nowrap;">100</div><div style="position:absolute;left:360.30px;top:62.59px;width:60px;text-align:center;line-height:22px;height:22px;font-size:16px;color:#dcdcdc;white-space:nowrap;">200</div><div style="position:absolute;left:494.30px;top:62.59px;width:60px;text-align:center;line-height:22px;height:22px;font-size:16px;color:#dcdcdc;white-space:nowrap;">500</div><div style="position:absolute;left:597.70px;top:62.59px;width:60px;text-align:center;line-height:22px;height:22px;font-size:16px;color:#dcdcdc;white-space:nowrap;">1k</div><div style="position:absolute;left:694.00px;top:62.59px;width:60px;text-align:center;line-height:22px;height:22px;font-size:16px;color:#dcdcdc;white-space:nowrap;">2k</div><div style="position:absolute;left:828.00px;top:62.59px;width:60px;text-align:center;line-height:22px;height:22px;font-size:16px;color:#dcdcdc;white-space:nowrap;">5k</div><div style="position:absolute;left:927.00px;top:62.59px;width:60px;text-align:center;line-height:22px;height:22px;font-size:16px;color:#dcdcdc;white-space:nowrap;">10k</div><div style="position:absolute;left:1017.30px;top:62.59px;width:60px;text-align:center;line-height:22px;height:22px;font-size:16px;color:#dcdcdc;white-space:nowrap;">20k</div><div style="position:absolute;left:160px;top:344.82px;line-height:25px;height:25px;font-size:18px;color:#c8c8c8;white-space:nowrap;">Band Select</div><div style="position:absolute;left:271px;top:340px;width:37px;height:30px;background:#000;border-bottom-left-radius:5px;"></div><div style="position:absolute;left:269.50px;top:343.22px;width:40px;text-align:center;line-height:25px;height:25px;font-size:17.8px;color:#fff;white-space:nowrap;">1</div><div style="position:absolute;left:283.5px;top:380px;width:12px;height:12px;box-sizing:border-box;border-radius:50%;border:2px solid #000;background:#3a3a3a"></div><div style="position:absolute;left:310px;top:340px;width:37px;height:30px;background:#000;"></div><div style="position:absolute;left:308.50px;top:343.22px;width:40px;text-align:center;line-height:25px;height:25px;font-size:17.8px;color:#fff;white-space:nowrap;">2</div><div style="position:absolute;left:322.5px;top:380px;width:12px;height:12px;box-sizing:border-box;border-radius:50%;border:2px solid #000;background:#3a3a3a"></div><div style="position:absolute;left:349px;top:340px;width:37px;height:30px;background:#000;"></div><div style="position:absolute;left:347.50px;top:343.22px;width:40px;text-align:center;line-height:25px;height:25px;font-size:17.8px;color:#fff;white-space:nowrap;">3</div><div style="position:absolute;left:361.5px;top:380px;width:12px;height:12px;box-sizing:border-box;border-radius:50%;border:2px solid #000;background:#3a3a3a"></div><div style="position:absolute;left:388px;top:340px;width:37px;height:30px;background:#000;"></div><div style="position:absolute;left:386.50px;top:343.22px;width:40px;text-align:center;line-height:25px;height:25px;font-size:17.8px;color:#fff;white-space:nowrap;">4</div><div style="position:absolute;left:400.5px;top:380px;width:12px;height:12px;box-sizing:border-box;border-radius:50%;border:2px solid #000;background:#3a3a3a"></div><div style="position:absolute;left:427px;top:340px;width:37px;height:30px;background:#000;"></div><div style="position:absolute;left:425.50px;top:343.22px;width:40px;text-align:center;line-height:25px;height:25px;font-size:17.8px;color:#fff;white-space:nowrap;">5</div><div style="position:absolute;left:439.5px;top:380px;width:12px;height:12px;box-sizing:border-box;border-radius:50%;border:2px solid #000;background:#3a3a3a"></div><div style="position:absolute;left:466px;top:340px;width:37px;height:30px;background:#000;"></div><div style="position:absolute;left:464.50px;top:343.22px;width:40px;text-align:center;line-height:25px;height:25px;font-size:17.8px;color:#fff;white-space:nowrap;">6</div><div style="position:absolute;left:478.5px;top:380px;width:12px;height:12px;box-sizing:border-box;border-radius:50%;border:2px solid #000;background:#3a3a3a"></div><div style="position:absolute;left:505px;top:340px;width:37px;height:30px;background:#139a8c;"></div><div style="position:absolute;left:503.50px;top:343.22px;width:40px;text-align:center;line-height:25px;height:25px;font-size:17.8px;color:#fff;white-space:nowrap;">7</div><div style="position:absolute;left:517.5px;top:380px;width:12px;height:12px;box-sizing:border-box;border-radius:50%;border:2px solid #000;background:#3a3a3a"></div><div style="position:absolute;left:544px;top:340px;width:37px;height:30px;background:#000;"></div><div style="position:absolute;left:542.50px;top:343.22px;width:40px;text-align:center;line-height:25px;height:25px;font-size:17.8px;color:#fff;white-space:nowrap;">8</div><div style="position:absolute;left:556.5px;top:380px;width:12px;height:12px;box-sizing:border-box;border-radius:50%;border:2px solid #000;background:#3a3a3a"></div><div style="position:absolute;left:583px;top:340px;width:37px;height:30px;background:#000;"></div><div style="position:absolute;left:581.50px;top:343.22px;width:40px;text-align:center;line-height:25px;height:25px;font-size:17.8px;color:#fff;white-space:nowrap;">9</div><div style="position:absolute;left:595.5px;top:380px;width:12px;height:12px;box-sizing:border-box;border-radius:50%;border:2px solid #000;background:#3a3a3a"></div><div style="position:absolute;left:622px;top:340px;width:37px;height:30px;background:#000;"></div><div style="position:absolute;left:620.50px;top:343.22px;width:40px;text-align:center;line-height:25px;height:25px;font-size:17.8px;color:#fff;white-space:nowrap;">10</div><div style="position:absolute;left:634.5px;top:380px;width:12px;height:12px;box-sizing:border-box;border-radius:50%;border:2px solid #000;background:#3a3a3a"></div><div style="position:absolute;left:661px;top:340px;width:37px;height:30px;background:#000;"></div><div style="position:absolute;left:659.50px;top:343.22px;width:40px;text-align:center;line-height:25px;height:25px;font-size:17.8px;color:#fff;white-space:nowrap;">11</div><div style="position:absolute;left:673.5px;top:380px;width:12px;height:12px;box-sizing:border-box;border-radius:50%;border:2px solid #000;background:#3a3a3a"></div><div style="position:absolute;left:700px;top:340px;width:37px;height:30px;background:#000;"></div><div style="position:absolute;left:698.50px;top:343.22px;width:40px;text-align:center;line-height:25px;height:25px;font-size:17.8px;color:#fff;white-space:nowrap;">12</div><div style="position:absolute;left:712.5px;top:380px;width:12px;height:12px;box-sizing:border-box;border-radius:50%;border:2px solid #000;background:#3a3a3a"></div><div style="position:absolute;left:739px;top:340px;width:37px;height:30px;background:#000;"></div><div style="position:absolute;left:737.50px;top:343.22px;width:40px;text-align:center;line-height:25px;height:25px;font-size:17.8px;color:#fff;white-space:nowrap;">13</div><div style="position:absolute;left:751.5px;top:380px;width:12px;height:12px;box-sizing:border-box;border-radius:50%;border:2px solid #000;background:#3a3a3a"></div><div style="position:absolute;left:778px;top:340px;width:37px;height:30px;background:#000;"></div><div style="position:absolute;left:776.50px;top:343.22px;width:40px;text-align:center;line-height:25px;height:25px;font-size:17.8px;color:#fff;white-space:nowrap;">14</div><div style="position:absolute;left:790.5px;top:380px;width:12px;height:12px;box-sizing:border-box;border-radius:50%;border:2px solid #000;background:#3a3a3a"></div><div style="position:absolute;left:817px;top:340px;width:37px;height:30px;background:#000;"></div><div style="position:absolute;left:815.50px;top:343.22px;width:40px;text-align:center;line-height:25px;height:25px;font-size:17.8px;color:#fff;white-space:nowrap;">15</div><div style="position:absolute;left:829.5px;top:380px;width:12px;height:12px;box-sizing:border-box;border-radius:50%;border:2px solid #000;background:#3a3a3a"></div><div style="position:absolute;left:856px;top:340px;width:37px;height:30px;background:#000;border-bottom-right-radius:5px;"></div><div style="position:absolute;left:854.50px;top:343.22px;width:40px;text-align:center;line-height:25px;height:25px;font-size:17.8px;color:#fff;white-space:nowrap;">16</div><div style="position:absolute;left:868.5px;top:380px;width:12px;height:12px;box-sizing:border-box;border-radius:50%;border:2px solid #000;background:#3a3a3a"></div><div style="position:absolute;left:967px;top:342px;width:90px;height:34px;box-sizing:border-box;border:2px solid #101010;border-radius:4px;background:linear-gradient(#808080,#5a5a5a);"></div><div style="position:absolute;left:966.50px;top:348.12px;width:90px;text-align:center;line-height:25px;height:25px;font-size:18px;color:#0e0e0e;white-space:nowrap;transform:scaleX(0.915);transform-origin:center center;">FLAT</div><div style="position:absolute;left:7px;top:403px;width:466px;height:46px;background:#6a6a6a;"></div><div style="position:absolute;left:476px;top:403px;width:339px;height:46px;background:#6a6a6a;"></div><div style="position:absolute;left:818px;top:403px;width:252px;height:46px;background:#6a6a6a;"></div><div style="position:absolute;left:482px;top:409px;width:90px;height:34px;box-sizing:border-box;border:2px solid #0c0c0c;border-radius:5px;background:linear-gradient(#fbf4cc,#e6ddb0);"></div><div style="position:absolute;left:482.50px;top:414.62px;width:90px;text-align:center;line-height:25px;height:25px;font-size:18px;color:#0e0e0e;white-space:nowrap;transform:scaleX(1.09);transform-origin:center center;">ON</div><div style="position:absolute;left:585.2px;top:415.59px;line-height:22px;height:22px;font-size:16px;color:#c2c8cc;white-space:nowrap;transform:scaleX(1.03);transform-origin:left center;">EQ</div><div style="position:absolute;left:824px;top:409px;width:90px;height:34px;box-sizing:border-box;border:2px solid #0c0c0c;border-radius:5px;background:linear-gradient(#fbf4cc,#e6ddb0);"></div><div style="position:absolute;left:824.50px;top:414.62px;width:90px;text-align:center;line-height:25px;height:25px;font-size:18px;color:#0e0e0e;white-space:nowrap;transform:scaleX(1.09);transform-origin:center center;">ON</div><div style="position:absolute;left:927px;top:415.59px;line-height:22px;height:22px;font-size:16px;color:#c2c8cc;white-space:nowrap;transform:scaleX(1.03);transform-origin:left center;">DELAY</div><div style="position:absolute;left:7px;top:454px;width:466px;height:412px;background:#333333;"></div><div style="position:absolute;left:476px;top:454px;width:339px;height:412px;background:#333333;"></div><div style="position:absolute;left:818px;top:454px;width:252px;height:412px;background:#333333;"></div><div style="position:absolute;left:515px;top:464px;width:90px;height:34px;box-sizing:border-box;border:2px solid #101010;border-radius:5px;background:linear-gradient(#808080,#5a5a5a);"></div><div style="position:absolute;left:515.00px;top:469.81px;width:90px;text-align:center;line-height:24px;height:24px;font-size:17px;color:#0e0e0e;white-space:nowrap;transform:scaleX(0.97);transform-origin:center center;">BYPASS</div><div style="position:absolute;left:621px;top:461px;width:165px;height:42px;background:#000;"></div><div style="position:absolute;left:623px;top:463px;width:33px;height:38px;border-radius:3px 0 0 3px;background:linear-gradient(#7a7a7a,#5e5e5e);box-shadow:inset 0 0 0 1px rgba(0,0,0,0.15)"></div><div style="position:absolute;left:751px;top:463px;width:33px;height:38px;border-radius:0 3px 3px 0;background:linear-gradient(#7a7a7a,#5e5e5e);box-shadow:inset 0 0 0 1px rgba(0,0,0,0.15)"></div><div style="position:absolute;left:643.30px;top:471.02px;width:120px;text-align:center;line-height:25px;height:25px;font-size:18px;color:#e0e0e0;white-space:nowrap;transform:scaleX(1.065);transform-origin:center center;">Band7</div><div style="position:absolute;left:527.80px;top:530.62px;width:100px;text-align:center;line-height:25px;height:25px;font-size:18px;color:#d0d0d0;white-space:nowrap;transform:scaleX(1.07);transform-origin:center center;">Type</div><div style="position:absolute;left:675.50px;top:530.82px;width:120px;text-align:center;line-height:25px;height:25px;font-size:18px;color:#d0d0d0;white-space:nowrap;transform:scaleX(1.045);transform-origin:center center;">Freq.[Hz]</div><div style="position:absolute;left:515px;top:562px;width:127px;height:42px;background:#000;"></div><div style="position:absolute;left:607px;top:564px;width:33px;height:38px;border-radius:0 3px 3px 0;background:linear-gradient(#7a7a7a,#5e5e5e);box-shadow:inset 0 0 0 1px rgba(0,0,0,0.15)"></div><div style="position:absolute;left:520.20px;top:573.29px;width:80px;text-align:center;line-height:22px;height:22px;font-size:16px;color:#e0e0e0;white-space:nowrap;">PEQ</div><svg style="position:absolute;left:0;top:0" width="1077" height="911" viewBox="0 0 1077 911"><path d="M632.6 481.6 L644.8 475.2 L644.8 488.1 Z" fill="#000"/><path d="M774 481.5 L762.1 474.9 L762.1 488.1 Z" fill="#000"/><path d="M616.9 576.9 L630.1 576.9 L623.5 589 Z" fill="#000"/></svg><div style="position:absolute;left:515px;top:665px;width:127px;height:42px;background:#000;"></div><div style="position:absolute;left:607px;top:667px;width:33px;height:38px;border-radius:0 3px 3px 0;background:linear-gradient(#7a7a7a,#5e5e5e);box-shadow:inset 0 0 0 1px rgba(0,0,0,0.15)"></div><svg style="position:absolute;left:0;top:0" width="1077" height="911" viewBox="0 0 1077 911"><path d="M616.9 679.9 L630.1 679.9 L623.5 692 Z" fill="#000"/></svg><div style="position:absolute;left:540.30px;top:676.00px;width:40px;text-align:center;line-height:23px;height:23px;font-size:16.5px;color:#e0e0e0;white-space:nowrap;">Q</div><div style="position:absolute;left:675.90px;top:680.82px;width:120px;text-align:center;line-height:25px;height:25px;font-size:18px;color:#d0d0d0;white-space:nowrap;transform:scaleX(1.07);transform-origin:center center;">Gain[dB]</div><svg style="position:absolute;left:0;top:0" width="1077" height="911" viewBox="0 0 1077 911"><circle cx="730.5" cy="587" r="19.2" fill="#000"/><circle cx="730.5" cy="587" r="16.5" fill="#0b7236"/><circle cx="730.5" cy="587" r="13.6" fill="#168f45"/><line x1="729.36" y1="583.16" x2="725.50" y2="570.12" stroke="#000" stroke-width="5.8" stroke-linecap="butt"/><line x1="729.14" y1="582.40" x2="725.56" y2="570.32" stroke="#fff" stroke-width="3.6" stroke-linecap="butt"/><rect x="729.00" y="561.70" width="3" height="3" fill="#a8a8a8"/><rect x="715.35" y="605.00" width="3" height="3" fill="#a8a8a8"/><rect x="742.65" y="605.00" width="3" height="3" fill="#a8a8a8"/></svg><svg style="position:absolute;left:0;top:0" width="1077" height="911" viewBox="0 0 1077 911"><circle cx="577.5" cy="738.1" r="19.2" fill="#000"/><circle cx="577.5" cy="738.1" r="16.5" fill="#0b7236"/><circle cx="577.5" cy="738.1" r="13.6" fill="#168f45"/><line x1="575.91" y1="734.43" x2="570.48" y2="721.96" stroke="#000" stroke-width="5.8" stroke-linecap="butt"/><line x1="575.59" y1="733.70" x2="570.56" y2="722.14" stroke="#fff" stroke-width="3.6" stroke-linecap="butt"/><rect x="576.00" y="712.80" width="3" height="3" fill="#a8a8a8"/><rect x="562.35" y="756.10" width="3" height="3" fill="#a8a8a8"/><rect x="589.65" y="756.10" width="3" height="3" fill="#a8a8a8"/></svg><svg style="position:absolute;left:0;top:0" width="1077" height="911" viewBox="0 0 1077 911"><circle cx="730.5" cy="738" r="19.2" fill="#000"/><circle cx="730.5" cy="738" r="16.5" fill="#0b7236"/><circle cx="730.5" cy="738" r="13.6" fill="#168f45"/><line x1="734.27" y1="739.34" x2="747.08" y2="743.90" stroke="#000" stroke-width="5.8" stroke-linecap="butt"/><line x1="735.02" y1="739.61" x2="746.89" y2="743.84" stroke="#fff" stroke-width="3.6" stroke-linecap="butt"/><rect x="729.00" y="712.70" width="3" height="3" fill="#a8a8a8"/><rect x="715.35" y="756.00" width="3" height="3" fill="#a8a8a8"/><rect x="742.65" y="756.00" width="3" height="3" fill="#a8a8a8"/></svg><div style="position:absolute;left:686px;top:613px;width:90px;height:21px;background:#000;"></div><div style="position:absolute;left:686.00px;top:612.92px;width:90px;text-align:center;line-height:25px;height:25px;font-size:18px;color:#e0e0e0;white-space:nowrap;">425</div><div style="position:absolute;left:533px;top:764px;width:90px;height:21px;background:#000;"></div><div style="position:absolute;left:533.00px;top:763.92px;width:90px;text-align:center;line-height:25px;height:25px;font-size:18px;color:#e0e0e0;white-space:nowrap;">4.2</div><div style="position:absolute;left:686px;top:764px;width:90px;height:21px;background:#000;"></div><div style="position:absolute;left:686.00px;top:763.92px;width:90px;text-align:center;line-height:25px;height:25px;font-size:18px;color:#e0e0e0;white-space:nowrap;">13.6</div><div style="position:absolute;left:922px;top:483px;width:33px;height:234px;background:transparent;box-sizing:border-box;border:1px solid #fff;"></div><div style="position:absolute;left:942px;top:494px;width:3px;height:196px;background:#000;"></div><div style="position:absolute;left:923px;top:497px;width:15px;height:2px;background:#585858;"></div><div style="position:absolute;left:929px;top:509px;width:9px;height:2px;background:#585858;"></div><div style="position:absolute;left:923px;top:521px;width:15px;height:2px;background:#585858;"></div><div style="position:absolute;left:929px;top:533px;width:9px;height:2px;background:#585858;"></div><div style="position:absolute;left:923px;top:545px;width:15px;height:2px;background:#585858;"></div><div style="position:absolute;left:929px;top:557px;width:9px;height:2px;background:#585858;"></div><div style="position:absolute;left:923px;top:569px;width:15px;height:2px;background:#585858;"></div><div style="position:absolute;left:929px;top:581px;width:9px;height:2px;background:#585858;"></div><div style="position:absolute;left:923px;top:593px;width:15px;height:2px;background:#585858;"></div><div style="position:absolute;left:929px;top:605px;width:9px;height:2px;background:#585858;"></div><div style="position:absolute;left:923px;top:617px;width:15px;height:2px;background:#585858;"></div><div style="position:absolute;left:929px;top:629px;width:9px;height:2px;background:#585858;"></div><div style="position:absolute;left:923px;top:641px;width:15px;height:2px;background:#585858;"></div><div style="position:absolute;left:929px;top:653px;width:9px;height:2px;background:#585858;"></div><div style="position:absolute;left:923px;top:665px;width:15px;height:2px;background:#585858;"></div><div style="position:absolute;left:923px;top:677px;width:15px;height:2px;background:#585858;"></div><div style="position:absolute;left:923px;top:689px;width:15px;height:2px;background:#585858;"></div><div style="position:absolute;left:923px;top:701px;width:15px;height:2px;background:#585858;"></div><div style="position:absolute;left:933px;top:688px;width:21px;height:27px;border-radius:3px;overflow:hidden;background:#b4b4b4"><div style="position:absolute;left:0;top:0;width:21px;height:2.5px;background:#f0f0f0"></div><div style="position:absolute;left:0;top:12.5px;width:21px;height:2px;background:#1a1a1a"></div><div style="position:absolute;left:0;top:14.5px;width:21px;height:9.5px;background:#e6e6e6"></div><div style="position:absolute;left:0;top:24px;width:21px;height:3px;background:#8a8a8a"></div></div><div style="position:absolute;left:891px;top:737px;width:90px;height:21px;background:#000;"></div><div style="position:absolute;left:891.00px;top:736.92px;width:90px;text-align:center;line-height:25px;height:25px;font-size:18px;color:#e0e0e0;white-space:nowrap;">0.00</div><div style="position:absolute;left:986.5px;top:735.82px;line-height:25px;height:25px;font-size:18px;color:#d0d0d0;white-space:nowrap;transform:scaleX(1.09);transform-origin:left center;">[ms]</div><div style="position:absolute;left:891px;top:776px;width:90px;height:21px;background:#000;"></div><div style="position:absolute;left:891.00px;top:775.92px;width:90px;text-align:center;line-height:25px;height:25px;font-size:18px;color:#e0e0e0;white-space:nowrap;">0.00</div><div style="position:absolute;left:873px;top:815px;width:127px;height:42px;background:#000;"></div><div style="position:absolute;left:965px;top:817px;width:33.5px;height:38px;border-radius:0 3px 3px 0;background:linear-gradient(#7a7a7a,#5e5e5e);box-shadow:inset 0 0 0 1px rgba(0,0,0,0.15)"></div><svg style="position:absolute;left:0;top:0" width="1077" height="911" viewBox="0 0 1077 911"><path d="M975.2 829.9 L988.4 829.9 L981.8 842 Z" fill="#000"/></svg><div style="position:absolute;left:893px;top:825.22px;line-height:25px;height:25px;font-size:18px;color:#e0e0e0;white-space:nowrap;transform:scaleX(1.07);transform-origin:left center;">meter</div><div style="position:absolute;left:7px;top:871px;width:1063px;height:36px;background:#6a6a6a;"></div><div style="position:absolute;left:725.50px;top:878.22px;width:300px;text-align:right;line-height:24px;height:24px;font-size:17.5px;color:#d4d4d4;white-space:nowrap;">AMP:Ch/Delay/Time 0 0</div><svg style="position:absolute;left:1036px;top:873px" width="32" height="32" viewBox="1036 873 32 32"><path d="M1041.2 891.5 A10.5 10.5 0 0 1 1054 879.3" fill="none" stroke="#d8d8d8" stroke-width="3.6"/><path d="M1055.8 873.9 L1060.9 881.8 L1052.2 881.6 Z" fill="#d8d8d8"/><path d="M1062.7 886.2 A10.5 10.5 0 0 1 1050 898.8" fill="none" stroke="#d8d8d8" stroke-width="3.6"/><path d="M1043 896.4 L1052 896.4 L1047.5 904 Z" fill="#d8d8d8"/></svg>
</body></html>
